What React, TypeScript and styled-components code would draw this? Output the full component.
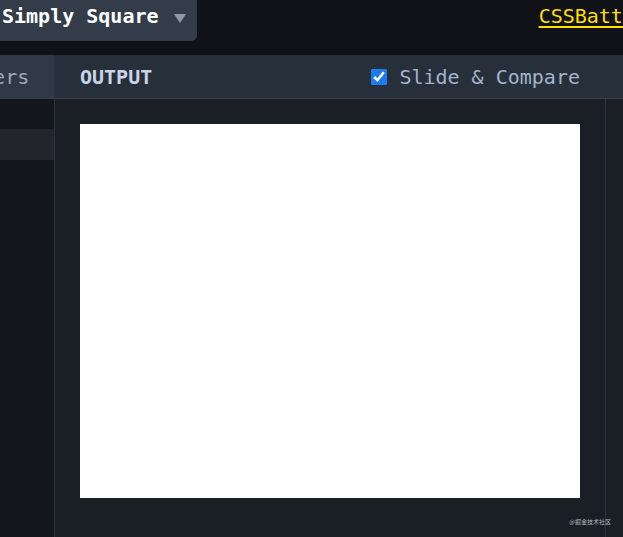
import React from "react";
import styled, { createGlobalStyle } from "styled-components";

const mono = `"DejaVu Sans Mono", "Liberation Mono", monospace`;

const GlobalStyle = createGlobalStyle`
  html, body {
    margin: 0;
    padding: 0;
    background: #101217;
    overflow: hidden;
  }
  * {
    box-sizing: border-box;
  }
`;

const Page = styled.div`
  position: relative;
  display: flex;
  flex-direction: column;
  width: 623px;
  height: 537px;
  overflow: hidden;
  font-family: ${mono};
`;

const TopBar = styled.header`
  display: flex;
  align-items: flex-start;
  justify-content: space-between;
  height: 55px;
  background: #101217;
`;

const LevelPicker = styled.div`
  display: flex;
  align-items: flex-start;
  gap: 15px;
  width: 197px;
  height: 41px;
  padding: 3px 11px 0 2px;
  background: #333d49;
  border-bottom-right-radius: 6px;
  color: #ffffff;
  font-size: 20px;
  line-height: 26px;
  font-weight: 700;
  white-space: nowrap;
`;

const Caret = styled.span`
  width: 0;
  height: 0;
  margin-top: 11px;
  border-left: 6px solid transparent;
  border-right: 6px solid transparent;
  border-top: 9px solid #8f9aa6;
`;

const BrandLink = styled.a`
  margin-top: 3px;
  margin-right: -24px;
  color: #ffdf00;
  font-size: 20px;
  line-height: 26px;
  text-decoration: underline;
  text-decoration-thickness: 2px;
  text-underline-offset: 3px;
  white-space: nowrap;
`;

const Panels = styled.div`
  display: flex;
  flex: 1;
  min-height: 0;
`;

const SidePane = styled.aside`
  display: flex;
  flex-direction: column;
  width: 55px;
  background: #14181c;
  border-right: 1px solid #2b343e;
  overflow: hidden;
`;

const PaneHeader = styled.div<{ tone: string }>`
  display: flex;
  align-items: center;
  flex-shrink: 0;
  height: 44px;
  padding: 0 25px;
  background: ${(p) => p.tone};
  border-bottom: 1px solid #36404b;
  font-size: 20px;
  white-space: nowrap;
`;

const SideTitle = styled.span`
  margin-left: -68px;
  color: #9aa7b6;
`;

const SideRow = styled.div<{ active?: boolean }>`
  height: 31px;
  margin-top: 30px;
  background: ${(p) => (p.active ? "#23242c" : "transparent")};
`;

const OutputPane = styled.section`
  display: flex;
  flex-direction: column;
  flex: 1;
  min-width: 0;
`;

const OutputTitle = styled.span`
  color: #c9d3e6;
  font-weight: 700;
`;

const Compare = styled.label`
  display: flex;
  align-items: center;
  gap: 12px;
  margin-left: auto;
  margin-right: 18px;
  color: #a3b3cc;
`;

const Check = styled.input`
  width: 16px;
  height: 16px;
  margin: 0 0 0 2px;
  accent-color: #1a7cf0;
`;

const OutputBody = styled.div`
  display: flex;
  flex: 1;
  background: #1a1e25;
`;

const Stage = styled.div`
  flex: 1;
  padding: 25px;
`;

const Target = styled.div`
  width: 500px;
  height: 374px;
  background: #ffffff;
`;

const Gutter = styled.div`
  width: 18px;
  border-left: 1px solid #2b333d;
`;

const Watermark = styled.div`
  position: absolute;
  right: 12px;
  bottom: 11px;
  color: #b4b8bf;
  font-family: "Noto Sans CJK SC", "Noto Sans", sans-serif;
  font-size: 6px;
  line-height: 8px;
`;

export default function App() {
  return (
    <Page>
      <GlobalStyle />
      <TopBar>
        <LevelPicker>
          Simply Square
          <Caret />
        </LevelPicker>
        <BrandLink href="#">CSSBattle</BrandLink>
      </TopBar>
      <Panels>
        <SidePane>
          <PaneHeader tone="#2f3a46">
            <SideTitle>Layers</SideTitle>
          </PaneHeader>
          <SideRow active />
        </SidePane>
        <OutputPane>
          <PaneHeader tone="#27303a">
            <OutputTitle>OUTPUT</OutputTitle>
            <Compare>
              <Check type="checkbox" defaultChecked />
              Slide &amp; Compare
            </Compare>
          </PaneHeader>
          <OutputBody>
            <Stage>
              <Target />
            </Stage>
            <Gutter />
          </OutputBody>
        </OutputPane>
      </Panels>
      <Watermark>@掘金技术社区</Watermark>
    </Page>
  );
}
